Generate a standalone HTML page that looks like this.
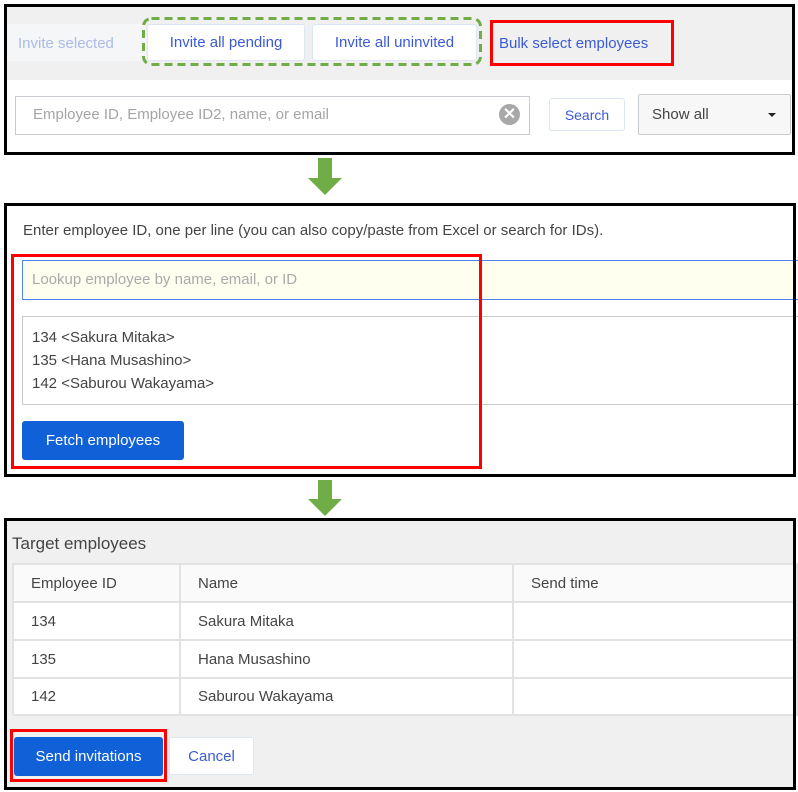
<!DOCTYPE html>
<html><head><meta charset="utf-8"><style>
*{box-sizing:border-box;margin:0;padding:0}
body{width:798px;height:792px;background:#fff;position:relative;overflow:hidden;font-family:"Liberation Sans",sans-serif;font-size:15px;color:#333}
.a{position:absolute}
.t{position:absolute;white-space:nowrap;line-height:1}
.btn{position:absolute;display:flex;align-items:center;justify-content:center;white-space:nowrap;border-radius:3px}
.cell{position:absolute;display:flex;align-items:center;padding-left:17px;background:#fff;border-right:2px solid #e2e2e2;border-bottom:2px solid #e2e2e2;color:#444}
</style></head><body>
<!-- panel 1 -->
<div class="a" style="left:4px;top:4px;width:791px;height:151px;background:#fff"></div>
<div class="a" style="left:6px;top:6px;width:788px;height:74px;background:#f0f0f0"></div>
<div class="a" style="left:6px;top:24px;width:140px;height:37px;background:#f5f6f8"></div>
<div class="t" style="left:18px;top:36px;color:#a9bde4">Invite selected</div>
<div class="btn" style="left:147px;top:24px;width:158px;height:37px;background:#fff;border:1px solid #dde6f6;color:#3b5bd6">Invite all pending</div>
<div class="btn" style="left:312px;top:24px;width:165px;height:37px;background:#fff;border:1px solid #dde6f6;color:#3b5bd6">Invite all uninvited</div>
<svg class="a" style="left:142px;top:17px" width="340" height="49"><rect x="1.5" y="1.5" width="337" height="46" rx="8" fill="none" stroke="#70ad47" stroke-width="3" stroke-dasharray="8 5"/></svg>
<div class="a" style="left:490px;top:20px;width:184px;height:46px;border:3px solid #f00"></div>
<div class="t" style="left:499px;top:36px;color:#3b5bd6">Bulk select employees</div>
<div class="a" style="left:15px;top:96px;width:515px;height:39px;border:1px solid #c8ccd0;background:#fff"></div>
<div class="t" style="left:33px;top:107px;color:#a5a5a5">Employee ID, Employee ID2, name, or email</div>
<div class="a" style="left:499px;top:104px;width:21px;height:21px;border-radius:50%;background:#a8a8a8;color:#fff;font-weight:bold;font-size:16px;line-height:21px;text-align:center">✕</div>
<div class="btn" style="left:549px;top:98px;width:76px;height:33px;border:1px solid #dde6f6;color:#3b5bd6;font-size:14px">Search</div>
<div class="a" style="left:638px;top:94px;width:153px;height:41px;border:1px solid #c8ccd0;background:#f7f7f7;border-radius:2px"></div>
<div class="t" style="left:652px;top:107px;color:#444">Show all</div>
<div class="a" style="left:768px;top:113px;border-left:4px solid transparent;border-right:4px solid transparent;border-top:4px solid #222"></div>
<div class="a" style="left:4px;top:4px;width:791px;height:151px;border:3px solid #000"></div>
<!-- arrow 1 -->
<div class="a" style="left:318px;top:158px;width:14px;height:21px;background:#70ad47"></div>
<div class="a" style="left:308px;top:178px;border-left:17px solid transparent;border-right:17px solid transparent;border-top:17px solid #70ad47"></div>
<!-- panel 2 -->
<div class="t" style="left:23px;top:223px;color:#444">Enter employee ID, one per line (you can also copy/paste from Excel or search for IDs).</div>
<div class="a" style="left:22px;top:260px;width:780px;height:40px;background:#fffff0;border:1px solid #4a86e8"></div>
<div class="t" style="left:32px;top:272px;color:#aaa">Lookup employee by name, email, or ID</div>
<div class="a" style="left:22px;top:316px;width:780px;height:89px;background:#fff;border:1px solid #c8ccd0"></div>
<div class="t" style="left:32px;top:326px;color:#444;line-height:23px;white-space:pre">134 &lt;Sakura Mitaka&gt;
135 &lt;Hana Musashino&gt;
142 &lt;Saburou Wakayama&gt;</div>
<div class="btn" style="left:22px;top:421px;width:162px;height:39px;background:#1060d8;color:#fff">Fetch employees</div>
<div class="a" style="left:11px;top:254px;width:471px;height:215px;border:3px solid #f00"></div>
<div class="a" style="left:4px;top:203px;width:792px;height:274px;border:3px solid #000"></div>
<!-- arrow 2 -->
<div class="a" style="left:318px;top:480px;width:14px;height:20px;background:#70ad47"></div>
<div class="a" style="left:308px;top:499px;border-left:17px solid transparent;border-right:17px solid transparent;border-top:17px solid #70ad47"></div>
<!-- panel 3 -->
<div class="a" style="left:4px;top:518px;width:792px;height:272px;background:#f0f0f0"></div>
<div class="t" style="left:12px;top:535px;font-size:17px;color:#444">Target employees</div>
<div class="a" style="left:12px;top:563px;width:786px;height:2px;background:#e2e2e2"></div>
<div class="a" style="left:12px;top:563px;width:2px;height:152px;background:#e2e2e2"></div>
<div class="cell" style="left:14px;top:565px;width:167px;height:38px;background:#fafafa">Employee ID</div>
<div class="cell" style="left:181px;top:565px;width:333px;height:38px;background:#fafafa">Name</div>
<div class="cell" style="left:514px;top:565px;width:284px;height:38px;background:#fafafa">Send time</div>
<div class="cell" style="left:14px;top:603px;width:167px;height:38px">134</div>
<div class="cell" style="left:181px;top:603px;width:333px;height:38px">Sakura Mitaka</div>
<div class="cell" style="left:514px;top:603px;width:284px;height:38px"></div>
<div class="cell" style="left:14px;top:641px;width:167px;height:38px">135</div>
<div class="cell" style="left:181px;top:641px;width:333px;height:38px">Hana Musashino</div>
<div class="cell" style="left:514px;top:641px;width:284px;height:38px"></div>
<div class="cell" style="left:14px;top:679px;width:167px;height:37px">142</div>
<div class="cell" style="left:181px;top:679px;width:333px;height:37px">Saburou Wakayama</div>
<div class="cell" style="left:514px;top:679px;width:284px;height:37px"></div>
<div class="btn" style="left:14px;top:737px;width:149px;height:39px;background:#1060d8;color:#fff">Send invitations</div>
<div class="a" style="left:10px;top:729px;width:157px;height:53px;border:3px solid #f00"></div>
<div class="btn" style="left:169px;top:737px;width:85px;height:38px;background:#fff;border:1px solid #dde6f6;color:#3b5bd6">Cancel</div>
<div class="a" style="left:4px;top:518px;width:792px;height:272px;border:3px solid #000"></div>
</body></html>
